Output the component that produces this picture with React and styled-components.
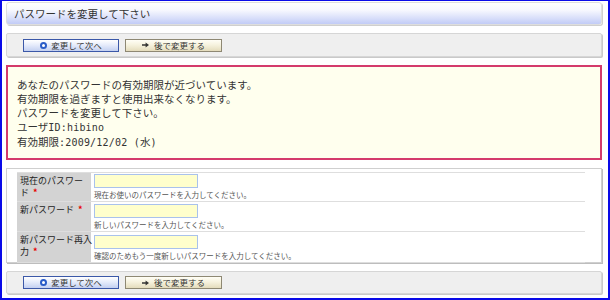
import React from "react";
import styled, { createGlobalStyle } from "styled-components";

const GlobalStyle = createGlobalStyle`
  html, body { margin: 0; padding: 0; background: #fff; }
  body {
    font-family: "Noto Sans CJK JP", "Noto Sans", "Liberation Sans", sans-serif;
    color: #333;
  }
  * { box-sizing: border-box; }
`;

const Frame = styled.div`
  width: 610px;
  height: 300px;
  border: 2px solid #0a0ae8;
  border-top-width: 1px;
  padding: 1px 6px 0 4px;
  display: flex;
  flex-direction: column;
  gap: 8px;
  overflow: hidden;
`;

const TitleBar = styled.div`
  height: 23px;
  border: 1px solid #dedede;
  border-radius: 3px;
  box-shadow: 1px 1px 0 #cfcfcf;
  background: linear-gradient(#ffffff 0%, #f6f7fe 35%, #c2ccf7 100%);
  padding-left: 7px;
  display: flex;
  align-items: center;
  font-size: 10.5px;
  color: #333;
  white-space: nowrap;
`;

const ButtonBar = styled.div`
  height: ${(p) => p.$h}px;
  background: #efefef;
  border: 1px solid #d6d6d6;
  border-radius: 2px;
  box-shadow: 1px 1px 0 #c9c9c9;
  padding-left: 16px;
  display: flex;
  align-items: center;
  gap: 6px;
`;

const Button = styled.button`
  width: ${(p) => (p.$primary ? 96 : 97)}px;
  height: 13px;
  padding: 0;
  margin: 0;
  border: 1px solid ${(p) => (p.$primary ? "#3b58a8" : "#8e8873")};
  background: ${(p) =>
    p.$primary
      ? "linear-gradient(#ffffff 0%, #e6ecfb 45%, #c3d0f1 100%)"
      : "linear-gradient(#fffef6 0%, #f6f2de 45%, #e4dcbc 100%)"};
  display: flex;
  align-items: center;
  justify-content: center;
  gap: ${(p) => (p.$primary ? 4 : 5)}px;
  font-family: "Noto Sans CJK JP", "Noto Sans", sans-serif;
  font-size: 8.5px;
  line-height: 11px;
  color: #333;
  cursor: pointer;
`;

const Ring = styled.span`
  width: 7px;
  height: 7px;
  border-radius: 50%;
  border: 2px solid #2a5cc8;
  background: #fff;
  display: inline-block;
`;

const Alert = styled.div`
  height: 95px;
  border: 2px solid #d43a6c;
  background: #ffffee;
  padding: 11px 9px 10px;
  font-size: 10.5px;
  line-height: 14px;
  color: #333;
`;

const Line = styled.div`
  white-space: nowrap;
`;

const Ascii = styled.span`
  font-family: "DejaVu Sans Mono", "Liberation Mono", monospace;
  font-size: 10px;
  letter-spacing: 0.2px;
`;

const FormPanel = styled.div`
  height: 95px;
  border: 1px solid #cfcfcf;
  box-shadow: 1px 1px 0 #bdbdbd;
  padding: 3px 16px 0 10px;
`;

const Row = styled.div`
  display: grid;
  grid-template-columns: 74px 1fr;
  border-bottom: 1px solid #dedede;
  &:first-child { border-top: 1px solid #dedede; }
`;

const Label = styled.div`
  background: #d3d3d3;
  padding: 2px 2px 0 3px;
  font-size: 9px;
  line-height: 12px;
  color: #222;
  white-space: nowrap;
`;

const Req = styled.span`
  color: #e80000;
  font-weight: bold;
  margin-left: 4px;
`;

const Value = styled.div`
  padding: ${(p) => p.$pt}px 4px 1px 3px;
  display: flex;
  flex-direction: column;
  gap: 1px;
`;

const Input = styled.input`
  width: 104px;
  height: 14px;
  border: 1px solid #a9c2ec;
  background: #ffffcc;
  padding: 0 2px;
  margin: 0;
  outline: none;
`;

const Hint = styled.div`
  font-size: 7.5px;
  line-height: 11px;
  color: #555;
  white-space: nowrap;
`;

const Arrow = () => (
  <svg width="7" height="6" viewBox="0 0 7 6">
    <path d="M0 2.2h3.6V0.4L7 3 3.6 5.6V3.8H0z" fill="#333" />
  </svg>
);

const Buttons = ({ h }) => (
  <ButtonBar $h={h}>
    <Button $primary>
      <Ring />
      変更して次へ
    </Button>
    <Button>
      <Arrow />
      後で変更する
    </Button>
  </ButtonBar>
);

const rows = [
  { label: ["現在のパスワー", "ド"], hint: "現在お使いのパスワードを入力してください。", pt: 1 },
  { label: ["新パスワード"], hint: "新しいパスワードを入力してください。", pt: 2 },
  { label: ["新パスワード再入", "力"], hint: "確認のためもう一度新しいパスワードを入力してください。", pt: 3 },
];

export default function App() {
  return (
    <>
      <GlobalStyle />
      <Frame>
        <TitleBar>パスワードを変更して下さい</TitleBar>
        <Buttons h={24} />
        <Alert>
          <Line>あなたのパスワードの有効期限が近づいています。</Line>
          <Line>有効期限を過ぎますと使用出来なくなります。</Line>
          <Line>パスワードを変更して下さい。</Line>
          <Line>
            ユーザ<Ascii>ID:hibino</Ascii>
          </Line>
          <Line>
            有効期限<Ascii>:2009/12/02 (</Ascii>水<Ascii>)</Ascii>
          </Line>
        </Alert>
        <FormPanel>
          {rows.map((r, i) => (
            <Row key={i}>
              <Label>
                {r.label.length === 2 ? (
                  <>
                    {r.label[0]}
                    <br />
                    {r.label[1]}
                    <Req>*</Req>
                  </>
                ) : (
                  <>
                    {r.label[0]}
                    <Req>*</Req>
                  </>
                )}
              </Label>
              <Value $pt={r.pt}>
                <Input type="password" />
                <Hint>{r.hint}</Hint>
              </Value>
            </Row>
          ))}
        </FormPanel>
        <Buttons h={23} />
      </Frame>
    </>
  );
}
